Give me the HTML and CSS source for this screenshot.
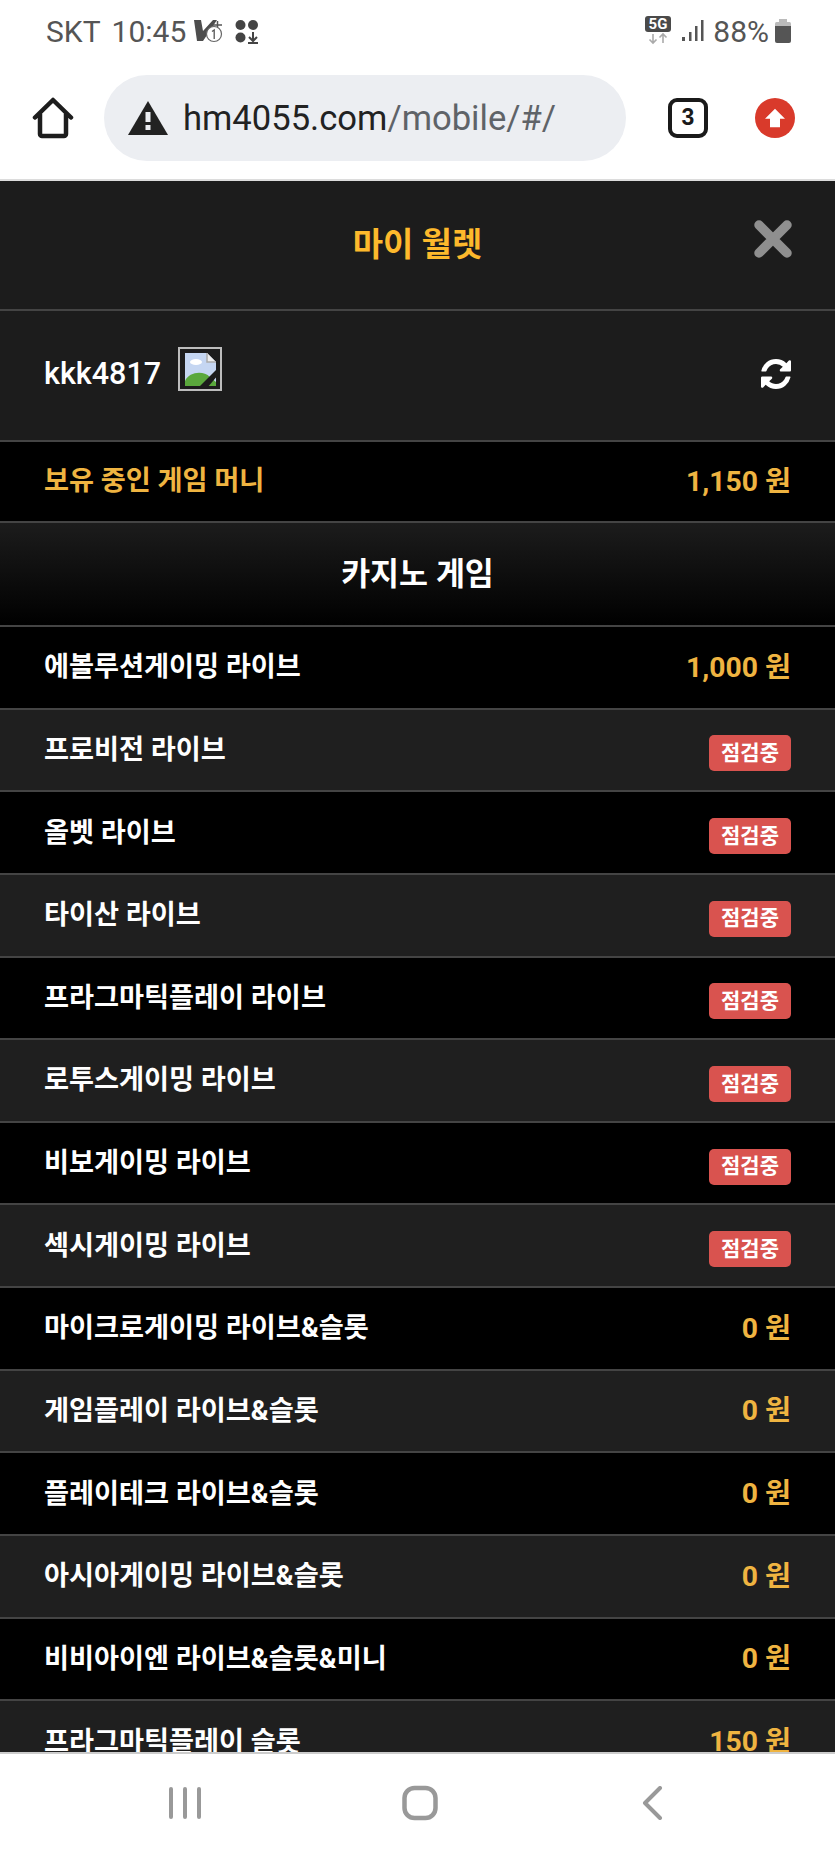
FILE: index.html
```html
<!DOCTYPE html>
<html lang="ko">
<head>
<meta charset="utf-8">
<title>마이 월렛</title>
<link rel="stylesheet" href="styles.css">
</head>
<body>
<div class="screen">
  <div class="status">
    <div class="status-left">
      <span>SKT</span><span class="time">10:45</span>
      <svg class="ico-volte" width="29" height="24" viewBox="0 0 29 24"><path d="M0 1h7l2 11L19 1h4L9 22H3z" fill="#4d4d4d"/><path d="M19 6h9M23.500 2v8" stroke="#555" stroke-width="1.500"/><circle cx="20" cy="15" r="7.500" fill="#fff" stroke="#666" stroke-width="1.200"/><path d="M18 12.500l2.200-1.500V20" fill="none" stroke="#555" stroke-width="1.300"/></svg>
      <svg class="ico-dots" width="24" height="25" viewBox="0 0 24 25"><circle cx="5.500" cy="6" r="5" fill="#444"/><circle cx="18" cy="6" r="5" fill="#444"/><circle cx="5.500" cy="18.500" r="5" fill="#444"/><path d="M18 13v9M14 18l4 4 4-4M13 24h10" fill="none" stroke="#444" stroke-width="2"/></svg>
    </div>
    <div class="status-right">
      <svg class="ico-net" width="28" height="30" viewBox="0 0 28 30"><rect x="1" y="1" width="26" height="16" rx="3" fill="#4a4a4a"/><text x="14" y="14" class="net">5G</text><path d="M9 19v9M5.500 24.500L9 28l3.500-3.500M19 28v-9M15.500 22.500L19 19l3.500 3.500" fill="none" stroke="#aaa" stroke-width="1.600"/></svg>
      <svg class="ico-signal" width="24" height="24" viewBox="0 0 24 24"><g fill="#555"><rect x="1" y="18" width="3" height="4"/><rect x="8" y="13" width="2.500" height="9"/><rect x="14" y="7" width="2.500" height="15"/><rect x="20" y="1" width="2.500" height="21"/></g></svg>
      <span class="pct">88%</span>
      <svg width="18" height="26" viewBox="0 0 18 26"><rect x="5" y="1" width="8" height="4" fill="#bbb"/><rect x="1" y="4" width="16" height="5" rx="1.500" fill="#bbb"/><path d="M1 8h16v15a2 2 0 0 1-2 2H3a2 2 0 0 1-2-2z" fill="#555"/></svg>
    </div>
  </div>

  <div class="toolbar">
    <svg class="home" width="42" height="42" viewBox="0 0 42 42"><path d="M3 20.500L21 3l18 17.500M8 17v20a2 2 0 0 0 2 2h22a2 2 0 0 0 2-2V17" fill="none" stroke="#1d1d1d" stroke-width="4.500" stroke-linecap="round" stroke-linejoin="round"/></svg>
    <div class="url">
      <svg width="40" height="34" viewBox="0 0 40 34"><path d="M20 0L40 34H0z" fill="#222"/><rect x="17.500" y="11" width="5" height="10" fill="#eceef2"/><rect x="17.500" y="24" width="5" height="5" fill="#eceef2"/></svg>
      <span class="url-text"><span class="host">hm4055.com</span>/mobile/#/</span>
    </div>
    <div class="tabs">3</div>
    <div class="update"><svg width="26" height="24" viewBox="0 0 26 24"><path d="M13 1L25 13h-6v10H7V13H1z" fill="#fff"/></svg></div>
  </div>

  <main class="wallet">
    <header class="wallet-head">
      <h1>마이 월렛</h1>
      <svg class="close" width="38" height="38" viewBox="0 0 38 38"><path d="M5 5l28 28M33 5L5 33" stroke="#8f8f8f" stroke-width="9.500" stroke-linecap="round"/></svg>
    </header>
    <section class="user">
      <div class="user-id">
        <span class="user-name">kkk4817</span>
        <span class="broken">
          <svg width="37" height="37" viewBox="0 0 37 37"><path d="M3 2h22l9 9v24H3z" fill="#c5d6f2"/><path d="M25 2l9 9h-9z" fill="#eee"/><path d="M25 2v9h9" fill="none" stroke="#aaa" stroke-width="1.500"/><ellipse cx="14" cy="11" rx="6" ry="3" fill="#fff"/><path d="M3 35v-5c4-9 18-11 25-4l6 5v4z" fill="#5aa83c"/><path d="M16 37L37 16v7L25 37z" fill="#1c1c1c"/></svg>
        </span>
      </div>
      <svg class="refresh" width="30" height="30" viewBox="0 0 1536 1536"><path fill="#fff" d="M1511 928q0 5-1 7-64 268-268 434.500T764 1536q-146 0-282.500-55T238 1324l-129 129q-19 19-45 19t-45-19-19-45V960q0-26 19-45t45-19h448q26 0 45 19t19 45-19 45l-137 137q71 66 161 102t187 36q134 0 250-65t186-179q11-17 53-117 8-23 30-23h192q13 0 22.500 9.500t9.500 22.500zm25-800v448q0 26-19 45t-45 19h-448q-26 0-45-19t-19-45 19-45l138-138Q969 256 768 256q-134 0-250 65T332 500q-11 17-53 117-8 23-30 23H50q-13 0-22.500-9.500T18 608v-7q65-268 270-434.500T768 0q146 0 284 55.500T1297 212l130-129q19-19 45-19t45 19 19 45z"/></svg>
    </section>
    <div class="row total"><span class="label gold">보유 중인 게임 머니</span><span class="gold">1,150 원</span></div>
    <h2 class="section-title"><span>카지노 게임</span></h2>
    <div class="row"><span class="label">에볼루션게이밍 라이브</span><span class="gold">1,000 원</span></div>
    <div class="row alt"><span class="label">프로비전 라이브</span><span class="badge">점검중</span></div>
    <div class="row"><span class="label">올벳 라이브</span><span class="badge">점검중</span></div>
    <div class="row alt"><span class="label">타이산 라이브</span><span class="badge">점검중</span></div>
    <div class="row"><span class="label">프라그마틱플레이 라이브</span><span class="badge">점검중</span></div>
    <div class="row alt"><span class="label">로투스게이밍 라이브</span><span class="badge">점검중</span></div>
    <div class="row"><span class="label">비보게이밍 라이브</span><span class="badge">점검중</span></div>
    <div class="row alt"><span class="label">섹시게이밍 라이브</span><span class="badge">점검중</span></div>
    <div class="row"><span class="label">마이크로게이밍 라이브&amp;슬롯</span><span class="gold">0 원</span></div>
    <div class="row alt"><span class="label">게임플레이 라이브&amp;슬롯</span><span class="gold">0 원</span></div>
    <div class="row"><span class="label">플레이테크 라이브&amp;슬롯</span><span class="gold">0 원</span></div>
    <div class="row alt"><span class="label">아시아게이밍 라이브&amp;슬롯</span><span class="gold">0 원</span></div>
    <div class="row"><span class="label">비비아이엔 라이브&amp;슬롯&amp;미니</span><span class="gold">0 원</span></div>
    <div class="row alt"><span class="label">프라그마틱플레이 슬롯</span><span class="gold">150 원</span></div>
  </main>

  <nav class="navbar">
    <svg width="34" height="32" viewBox="0 0 34 32"><path d="M3 2v28M17 2v28M31 2v28" stroke="#999" stroke-width="4" stroke-linecap="round"/></svg>
    <svg class="nav-home" width="36" height="36" viewBox="0 0 36 36"><rect x="2.500" y="3" width="31" height="30" rx="10" fill="none" stroke="#999" stroke-width="4.500"/></svg>
    <svg width="22" height="34" viewBox="0 0 22 34"><path d="M19 2L4 17l15 15" fill="none" stroke="#999" stroke-width="4" stroke-linecap="round" stroke-linejoin="round"/></svg>
  </nav>
</div>
</body>
</html>
```

FILE: styles.css
```css
* { box-sizing: border-box; margin: 0; padding: 0; }
html, body { width: 835px; height: 1856px; overflow: hidden; background: #fff; }
body { font-family: Roboto, "Noto Sans CJK KR", "Liberation Sans", sans-serif; }
.screen { width: 835px; height: 1856px; display: flex; flex-direction: column; }

.status { height: 62px; flex: none; display: flex; justify-content: space-between; align-items: center; padding: 0 43px 0 46px; color: #555; font-size: 30px; }
.status-left, .status-right { display: flex; align-items: center; }
.status-left { gap: 8px; }
.time { margin-left: 3px; }
.ico-dots { margin-left: 4px; }
.status-right { gap: 6px; }
.ico-net { margin-right: 3px; margin-top: -2px; }
.pct { margin-left: 2px; margin-right: -1px; }
.net { font: 700 15px Roboto, sans-serif; fill: #fff; text-anchor: middle; }

.toolbar { height: 119px; flex: none; display: flex; align-items: center; padding: 0 0 6px 32px; border-bottom: 2px solid #dcdcdc; }
.home { flex: none; }
.url { width: 522px; height: 86px; margin-left: 30px; flex: none; background: #eceef2; border-radius: 43px; display: flex; align-items: center; padding-left: 24px; gap: 15px; font-size: 34.6px; color: #5f6368; }
.host { color: #222; }
.tabs { width: 40px; height: 40px; margin-left: 42px; flex: none; border: 4px solid #1a1a1a; border-radius: 9px; display: flex; align-items: center; justify-content: center; font: 700 23px "Liberation Sans", sans-serif; color: #1a1a1a; }
.update { width: 40px; height: 40px; margin-left: 47px; flex: none; border-radius: 50%; background: #d93a2b; display: flex; align-items: center; justify-content: center; }
.update svg { width: 22px; height: 20px; }

.wallet { flex: 1; min-height: 0; overflow: hidden; background: #1c1c1c; color: #fff; }
.wallet-head { height: 130px; display: flex; align-items: center; justify-content: center; position: relative; border-bottom: 2px solid #444; }
.wallet-head h1 { font-size: 33px; font-weight: 700; color: #fdb92c; line-height: 1; margin-top: -2px; }
.close { position: absolute; right: 43px; top: 39px; }

.user { height: 131px; display: flex; align-items: center; justify-content: space-between; padding: 0 44px 0 44px; border-bottom: 2px solid #444; }
.user-id { display: flex; align-items: center; gap: 17px; font-size: 30.500px; font-weight: 500; }
.user-name { margin-top: -5px; }
.broken { width: 44px; height: 44px; border: 2px solid #bdbdbd; background: #1c1c1c; display: flex; align-items: center; justify-content: center; margin-top: -13px; }
.broken svg { flex: none; }
.refresh { margin-top: -4px; }

.row { height: 82.65px; display: flex; align-items: center; justify-content: space-between; padding: 0 44px; background: #000; border-bottom: 2px solid #444; font-size: 27.200px; font-weight: 700; line-height: 1; }
.row.alt { background: #1f1f1f; }
.label { margin-top: 1px; }
.row .gold:last-child { font-size: 28.300px; margin-top: 1px; }
.row.total { height: 81px; }
.gold { color: #efb441; }
.badge { width: 82px; height: 36px; background: #d9534f; border-radius: 5px; font-size: 21px; display: flex; align-items: center; justify-content: center; margin-top: 7px; }

.section-title { height: 104px; display: flex; align-items: center; justify-content: center; background: linear-gradient(#1c1c1c, #000); border-bottom: 2px solid #444; font-size: 31.500px; font-weight: 700; }
.section-title span { margin-top: -6px; }

.navbar { height: 104px; flex: none; background: #fff; border-top: 2px solid #ccc; display: flex; align-items: center; justify-content: space-between; padding: 0 172px 4px 168px; }
.nav-home { margin-left: -3px; }
```
